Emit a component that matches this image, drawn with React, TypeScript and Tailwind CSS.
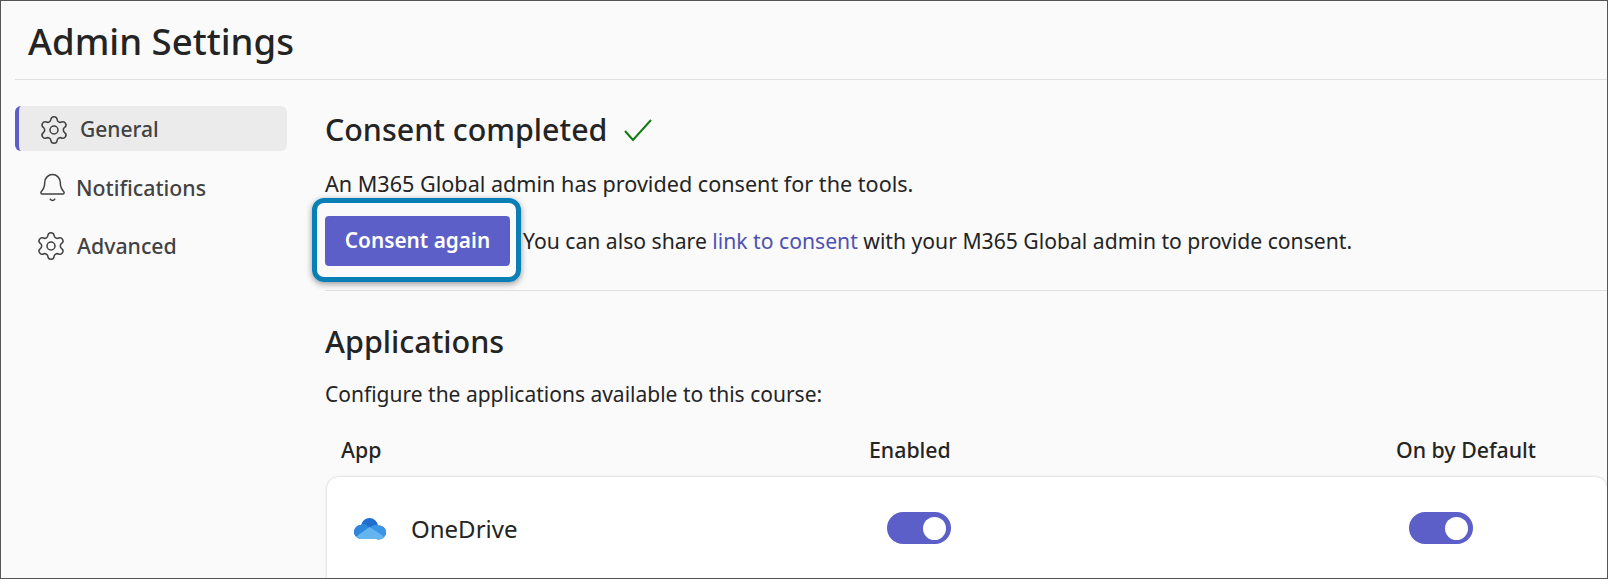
import { Bell, Settings } from 'lucide-react'

const FONT = "font-['Noto_Sans','Open_Sans',sans-serif]"

function Toggle() {
  return (
    <div className="-mt-[2px] flex h-[32px] w-[64px] items-center justify-end rounded-full bg-[#5b5fc7] pr-[5px]">
      <div className="h-[23px] w-[23px] rounded-full bg-white" />
    </div>
  )
}

function OneDriveIcon() {
  return (
    <svg width="32" height="22" viewBox="0 0 32 22">
      <defs>
        <clipPath id="cloud">
          <circle cx="15.500" cy="8.500" r="8.500" />
          <circle cx="7" cy="14" r="7" />
          <circle cx="25" cy="14.500" r="7" />
          <rect x="6" y="12" width="20" height="9" />
        </clipPath>
      </defs>
      <g clipPath="url(#cloud)">
        <rect width="32" height="22" fill="#1f6fd0" />
        <path d="M0 6h11l6 5-9 6H0z" fill="#2f87dc" />
        <path d="M32 7H20l-5 3 8 8h9z" fill="#3c95e4" />
        <path d="M0 20l15.500-11L32 20v2H0z" fill="#64b5ef" />
      </g>
    </svg>
  )
}

export default function App() {
  return (
    <div className={`${FONT} box-border h-[579px] w-[1608px] overflow-hidden border border-[#555] bg-[#fafafa] text-[#242424]`}>
      <div className="pl-[14px]">
        <h1 className="flex h-[79px] items-center border-b border-[#e0e0e0] pt-[3px] pl-[13px] text-[36.600px] font-medium">
          Admin Settings
        </h1>
        <div className="flex">
          <nav className="w-[272px] shrink-0 pt-[26px] text-[#424242]">
            <div className="flex h-[45px] items-center gap-[10px] rounded-md border-l-[4px] border-[#5b5fc7] bg-[#ebebeb] pt-[2px] pl-[19px] text-[21px] font-medium">
              <Settings size={32} strokeWidth={1.15} />
              General
            </div>
            <div className="mt-[13px] flex h-[45px] items-center gap-[8px] pt-[2px] pl-[22px] text-[21.300px] font-medium">
              <Bell size={31} strokeWidth={1.15} />
              Notifications
            </div>
            <div className="mt-[13px] flex h-[45px] items-center gap-[10px] pt-[2px] pl-[20px] text-[21.300px] font-medium">
              <Settings size={32} strokeWidth={1.15} />
              Advanced
            </div>
          </nav>
          <main className="ml-[38px] flex-1">
            <div className="mt-[25px] flex h-[50px] items-center gap-[16px] text-[30.400px] font-medium">
              <span>Consent completed</span>
              <svg width="30" height="26" viewBox="0 0 30 26">
                <path d="M2 14l8 9L28 3" fill="none" stroke="#107c10" strokeWidth="2" />
              </svg>
            </div>
            <p className="mt-[15px] text-[21.600px] leading-[28px]">An M365 Global admin has provided consent for the tools.</p>
            <div className="mt-[18px] flex items-center gap-[13px] border-b border-[#e0e0e0] pb-[24px] text-[21.150px]">
              <div className="relative">
                <button className="h-[50px] w-[185px] rounded-[4px] bg-[#5b5fc7] text-[20.800px] font-semibold text-white">
                  Consent again
                </button>
                <div className="absolute -top-[18px] -right-[11px] -bottom-[16px] -left-[13px] rounded-[12px] border-[5px] border-[#0a7fb5] shadow-[0_2px_6px_rgba(0,0,0,0.4)]" />
              </div>
              <p>
                You can also share <span className="text-[#4f52b2]">link to consent</span> with your M365 Global admin to provide consent.
              </p>
            </div>
            <h2 className="mt-[26px] text-[30.500px] leading-[48px] font-medium">Applications</h2>
            <p className="mt-[15px] text-[21px] leading-[28px]">Configure the applications available to this course:</p>
            <div className="mt-[28px] flex h-[28px] items-center text-[21.300px] font-medium">
              <span className="ml-[16px] w-[528px]">App</span>
              <span className="w-[527px]">Enabled</span>
              <span>On by Default</span>
            </div>
            <div className="mt-[13px] ml-[2px] flex h-[104px] items-center rounded-t-[12px] bg-white pl-[27px] shadow-[0_0_3px_rgba(0,0,0,0.2)]">
              <div className="flex w-[533px] items-center gap-[25px] text-[24px]">
                <OneDriveIcon />
                OneDrive
              </div>
              <div className="w-[522px]">
                <Toggle />
              </div>
              <Toggle />
            </div>
          </main>
        </div>
      </div>
    </div>
  )
}
